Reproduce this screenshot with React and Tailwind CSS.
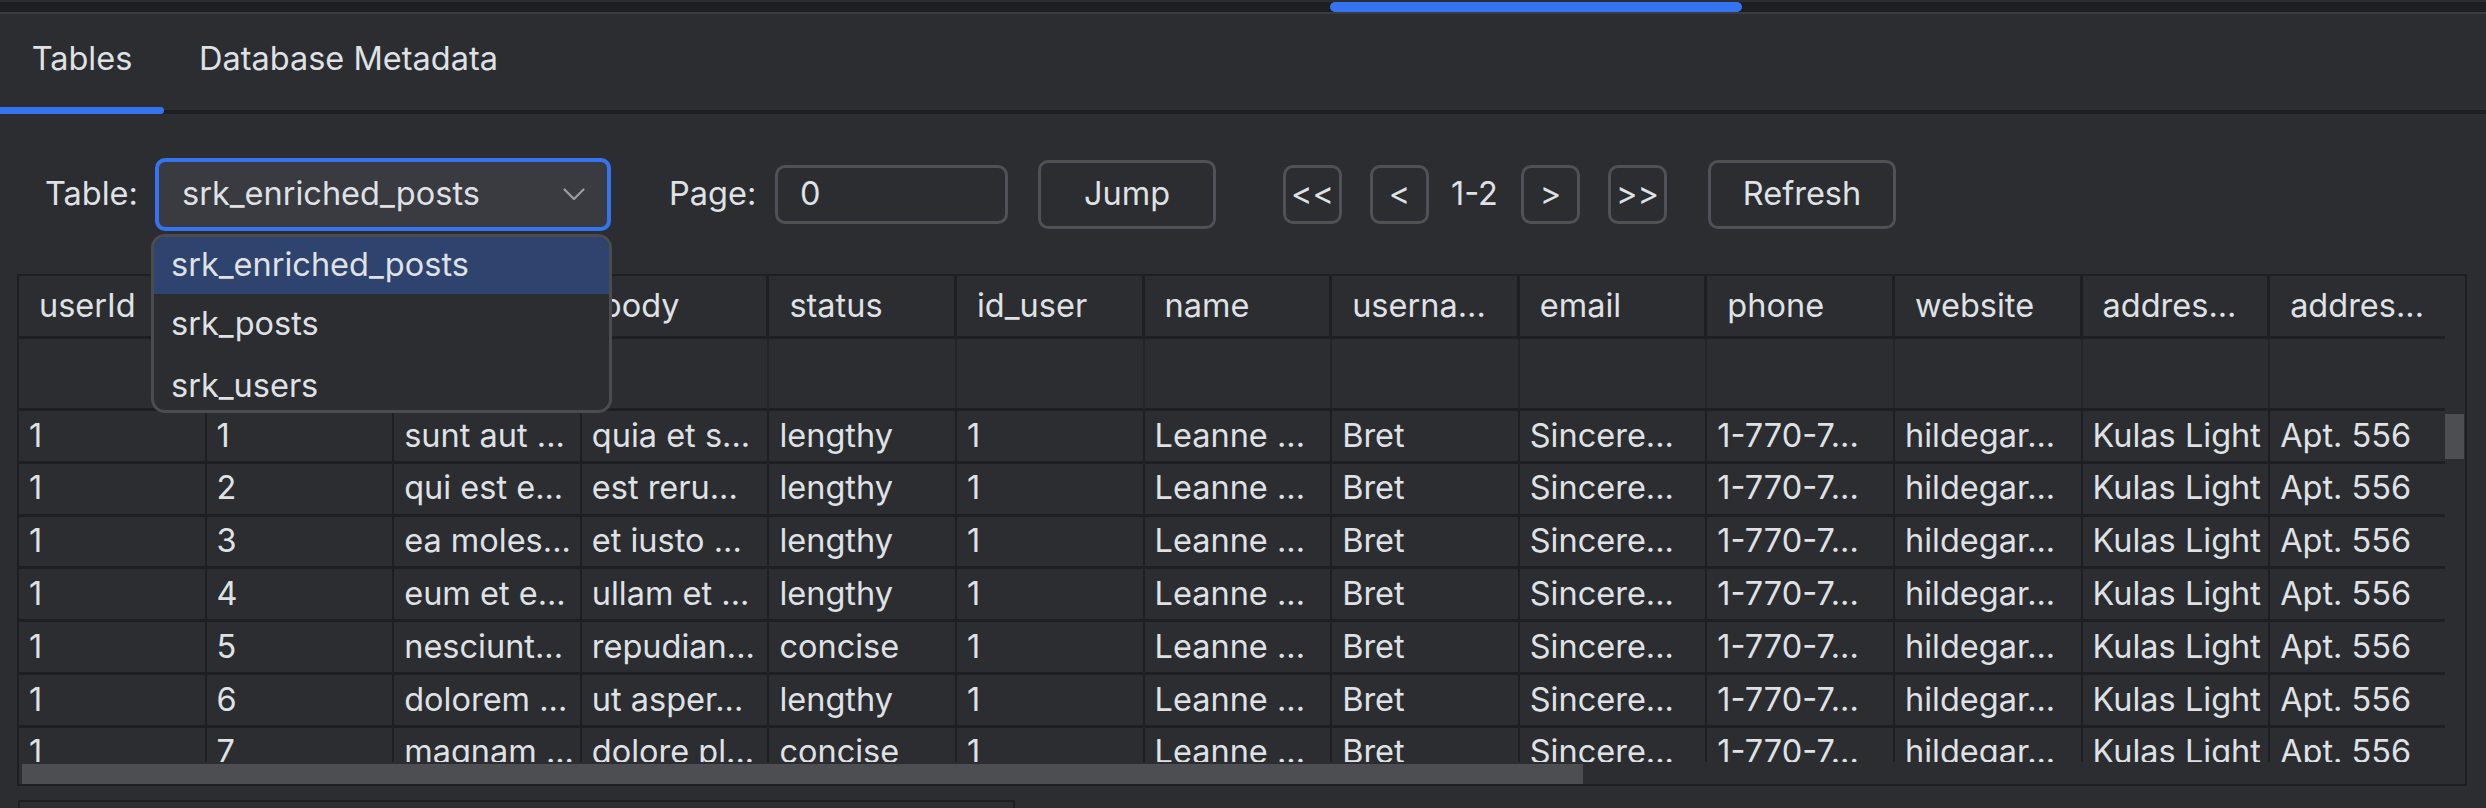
const COLUMNS = ['userId', 'id', 'title', 'body', 'status', 'id_user', 'name', 'userna...', 'email', 'phone', 'website', 'addres...', 'addres...'];

const titles = ['sunt aut ...', 'qui est e...', 'ea moles...', 'eum et e...', 'nesciunt...', 'dolorem ...', 'magnam ...'];
const bodies = ['quia et s...', 'est reru...', 'et iusto ...', 'ullam et ...', 'repudian...', 'ut asper...', 'dolore pl...'];
const statuses = ['lengthy', 'lengthy', 'lengthy', 'lengthy', 'concise', 'lengthy', 'concise'];

const rows = titles.map((t, i) => [
  '1', String(i + 1), t, bodies[i], statuses[i], '1', 'Leanne ...', 'Bret',
  'Sincere...', '1-770-7...', 'hildegar...', 'Kulas Light', 'Apt. 556',
]);

const TABLES = [
  { name: 'srk_enriched_posts', cls: 'h-[57px] bg-[#2e436e]' },
  { name: 'srk_posts', cls: 'h-[61px]' },
  { name: 'srk_users', cls: 'h-[62px]' },
];

function SmallButton({ children, className = '' }) {
  return (
    <button className={`w-[59px] h-[59px] shrink-0 rounded-[10px] border-[3px] border-[#4e5157] flex items-center justify-center ${className}`}>
      {children}
    </button>
  );
}

export default function App() {
  return (
    <div className="relative h-[808px] w-[2486px] overflow-hidden bg-[#2b2d30] text-[#dfe1e5] text-[32.5px] font-['Inter',sans-serif]">
      {/* top strip */}
      <div className="h-[12px] bg-[#1e1f22] border-b-2 border-[#393b40]">
        <div className="ml-[1330px] mt-[2px] w-[412px] h-[10px] rounded-[5px] bg-[#3574f0]" />
      </div>

      {/* tabs */}
      <div className="flex h-[100px] border-b-4 border-[#1e1f22]">
        <div className="relative w-[164px] flex items-center justify-center pb-[6px]">
          Tables
          <div className="absolute left-0 bottom-[-4px] w-[164px] h-[7px] rounded-r-full bg-[#3574f0]" />
        </div>
        <div className="px-[35px] flex items-center pb-[6px]">Database Metadata</div>
      </div>

      {/* controls */}
      <div className="h-[160px] flex items-center pl-[45px]">
        <span className="w-[93px] shrink-0">Table:</span>
        <div className="ml-[17px] w-[456px] h-[73px] shrink-0 rounded-[10px] border-4 border-[#3574f0] bg-[#393b40] flex items-center justify-between pl-[23px] pr-[22px]">
          <span>srk_enriched_posts</span>
          <svg width="22" height="13" viewBox="0 0 22 13" fill="none">
            <polyline points="1.5,1.5 11,11 20.5,1.5" stroke="#9a9da4" strokeWidth="2.2" strokeLinecap="round" strokeLinejoin="round" />
          </svg>
        </div>
        <span className="ml-[58px] w-[86px] shrink-0">Page:</span>
        <div className="ml-[20px] w-[233px] h-[59px] shrink-0 rounded-[10px] border-[3px] border-[#4e5157] flex items-center pl-[22px]">0</div>
        <button className="ml-[30px] w-[178px] h-[69px] shrink-0 rounded-[10px] border-[3px] border-[#4e5157]">Jump</button>
        <SmallButton className="ml-[67px]">&lt;&lt;</SmallButton>
        <SmallButton className="ml-[28px]">&lt;</SmallButton>
        <span className="ml-[22px] w-[47px] shrink-0">1-2</span>
        <SmallButton className="ml-[23px]">&gt;</SmallButton>
        <SmallButton className="ml-[28px]">&gt;&gt;</SmallButton>
        <button className="ml-[41px] w-[188px] h-[69px] shrink-0 rounded-[10px] border-[3px] border-[#4e5157]">Refresh</button>
      </div>

      {/* table */}
      <div className="ml-[17px] w-[2450px] border-2 border-[#1e1f22]">
        <div className="flex">
          <div className="w-[2426px] overflow-hidden">
            <div className="flex w-max h-[63px] border-b-[3px] border-[#1e1f22]">
              {COLUMNS.map((c, i) => (
                <div key={i} className="w-[187.6px] shrink-0 h-full border-r-[3px] border-[#1e1f22] pl-[20px] flex items-center whitespace-nowrap overflow-hidden">
                  {c}
                </div>
              ))}
            </div>
            <div className="flex w-max h-[72px] border-b-[3px] border-[#1e1f22]">
              {COLUMNS.map((c, i) => (
                <div key={i} className="w-[187.6px] shrink-0 h-full border-r-2 border-[#232427]" />
              ))}
            </div>
          </div>
          <div className="w-[20px]" />
        </div>
        <div className="flex h-[351px]">
          <div className="w-[2426px] overflow-hidden">
            {rows.map((r, ri) => (
              <div key={ri} className="flex w-max h-[52.8px] border-b-[3px] border-[#1e1f22]">
                {r.map((v, ci) => (
                  <div key={ci} className="w-[187.6px] shrink-0 h-full border-r-2 border-[#1e1f22] pl-[10px] flex items-center whitespace-nowrap overflow-hidden">
                    {v}
                  </div>
                ))}
              </div>
            ))}
          </div>
          <div className="w-[20px]">
            <div className="mt-[3px] w-[19px] h-[45px] bg-[#4c4e52]" />
          </div>
        </div>
        <div className="h-[22px] flex items-end">
          <div className="ml-[3px] w-[1561px] h-[20px] bg-[#4c4e52]" />
        </div>
      </div>

      {/* bottom panel */}
      <div className="mt-[14px] ml-[18px] w-[997px] h-[12px] border-t-2 border-x-2 border-[#1e1f22]" />

      {/* dropdown popup */}
      <div className="absolute left-[151px] top-[234px] w-[461px] h-[179px] rounded-[14px] border-[3px] border-[#4a4c50] bg-[#2b2d30] overflow-hidden">
        {TABLES.map((t) => (
          <div key={t.name} className={`flex items-center pl-[17px] shrink-0 ${t.cls}`}>
            {t.name}
          </div>
        ))}
      </div>
    </div>
  );
}
